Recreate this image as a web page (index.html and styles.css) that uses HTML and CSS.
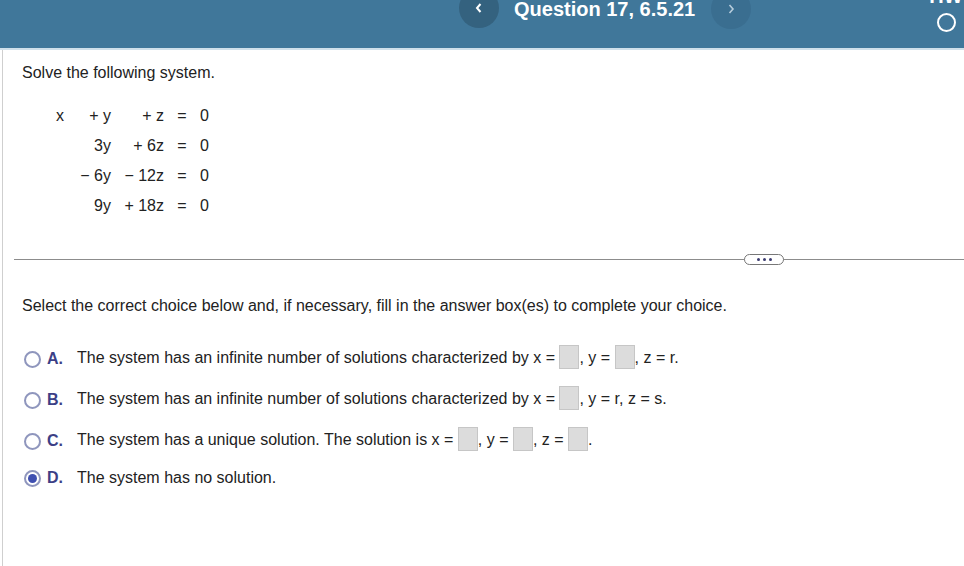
FILE: index.html
```html
<!DOCTYPE html>
<html>
<head>
<meta charset="utf-8">
<link rel="stylesheet" href="styles.css">
</head>
<body>
<header class="top">
  <div class="nav">
    <div class="navbtn prev"><svg width="10" height="12" viewBox="0 0 10 12"><path d="M6.5 2 L3 6 L6.5 10" fill="none" stroke="#fff" stroke-width="2"/></svg></div>
    <div class="title">Question 17, 6.5.21</div>
    <div class="navbtn next"><svg width="10" height="12" viewBox="0 0 10 12"><path d="M3.5 2 L7 6 L3.5 10" fill="none" stroke="#b7cddc" stroke-width="1.6"/></svg></div>
  </div>
  <div class="hw">
    <div class="hwtext">HW</div>
    <div class="ring"></div>
  </div>
</header>
<main class="content">
  <p class="prompt">Solve the following system.</p>
  <div class="system">
    <span class="c1">x</span><span class="c2">+ y</span><span class="c3">+ z</span><span class="c4">=</span><span class="c5">0</span>
    <span class="c1"></span><span class="c2">3y</span><span class="c3">+ 6z</span><span class="c4">=</span><span class="c5">0</span>
    <span class="c1"></span><span class="c2">− 6y</span><span class="c3">− 12z</span><span class="c4">=</span><span class="c5">0</span>
    <span class="c1"></span><span class="c2">9y</span><span class="c3">+ 18z</span><span class="c4">=</span><span class="c5">0</span>
  </div>
  <div class="divider"><span class="pill"><i></i><i></i><i></i></span></div>
  <p class="instr">Select the correct choice below and, if necessary, fill in the answer box(es) to complete your choice.</p>
  <div class="choices">
    <div class="choice"><span class="radio"></span><span class="letter">A.</span><span class="text">The system has an infinite number of solutions characterized by x = <span class="box"></span>, y = <span class="box"></span>, z = r.</span></div>
    <div class="choice"><span class="radio"></span><span class="letter">B.</span><span class="text">The system has an infinite number of solutions characterized by x = <span class="box"></span>, y = r, z = s.</span></div>
    <div class="choice"><span class="radio"></span><span class="letter">C.</span><span class="text">The system has a unique solution. The solution is x = <span class="box"></span>, y = <span class="box"></span>, z = <span class="box"></span>.</span></div>
    <div class="choice sel"><span class="radio on"></span><span class="letter">D.</span><span class="text">The system has no solution.</span></div>
  </div>
</main>
</body>
</html>
```
FILE: styles.css
```css
* { box-sizing: border-box; }
html, body { margin: 0; padding: 0; background: #fff; }
body {
  font-family: "Liberation Sans", Arial, sans-serif;
  color: #222;
  width: 964px;
  height: 566px;
  overflow: hidden;
}
.top {
  height: 50px;
  background: #40779a;
  border-bottom: 2px solid #cfe0ea;
  position: relative;
  overflow: hidden;
}
.nav {
  display: flex;
  align-items: flex-start;
  padding-left: 459px;
}
.navbtn {
  width: 40px;
  height: 40px;
  border-radius: 50%;
  margin-top: -12px;
  display: flex;
  align-items: center;
  justify-content: center;
  padding-top: 12px;
}
.navbtn svg { margin-top: -12px; }
.prev { background: #34627f; }
.next { background: #3a6e90; margin-left: 16px; margin-top: -11px; }
.title {
  color: #fff;
  font-weight: bold;
  font-size: 20px;
  margin-left: 15px;
  margin-top: -2px;
  line-height: 22px;
}
.hw {
  position: absolute;
  right: 4px;
  top: 0;
  width: 28px;
  display: flex;
  flex-direction: column;
  align-items: center;
}
.hwtext {
  color: #fff;
  font-weight: bold;
  font-size: 20px;
  line-height: 20px;
  margin-top: -14px;
}
.ring {
  width: 19px;
  height: 19px;
  border: 2.5px solid #fff;
  border-radius: 50%;
  margin-top: 7px;
}
.content {
  border-left: 1px solid #cfcfcf;
  margin-left: 2px;
  height: 516px;
  padding-top: 14px;
}
.prompt {
  margin: 0 0 0 19px;
  font-size: 16px;
  line-height: 18px;
}
.system {
  display: grid;
  grid-template-columns: 20px 35px 53px 36px 20px;
  grid-auto-rows: 30px;
  margin: 25px 0 0 53px;
  font-size: 16px;
  line-height: 18px;
  width: max-content;
}
.system span { text-align: right; white-space: nowrap; }
.system .c1 { text-align: left; }
.system .c4 { text-align: center; }
.system .c5 { text-align: left; }
.divider {
  margin: 32px 0 0 11px;
  height: 1px;
  background: #8c8c8c;
  position: relative;
}
.pill {
  position: absolute;
  left: 730px;
  top: -5px;
  width: 40px;
  height: 11px;
  border: 1px solid #777;
  border-radius: 6px;
  background: #fff;
  display: flex;
  align-items: center;
  justify-content: center;
  gap: 3px;
}
.pill i {
  width: 3px;
  height: 3px;
  background: #3c3c70;
  border-radius: 50%;
}
.instr {
  margin: 37px 0 0 19px;
  font-size: 16px;
  line-height: 18px;
}
.choices {
  margin: 32px 0 0 21px;
  display: flex;
  flex-direction: column;
  gap: 17px;
}
.choice {
  display: flex;
  align-items: center;
  font-size: 16px;
  height: 24px;
}
.choice.sel { margin-top: -4px; }
.radio {
  width: 17px;
  height: 17px;
  border: 2px solid #8f96bd;
  border-radius: 50%;
  flex: none;
  display: flex;
  align-items: center;
  justify-content: center;
}
.radio.on::after {
  content: "";
  width: 9px;
  height: 9px;
  border-radius: 50%;
  background: #3f4fb0;
}
.letter {
  font-weight: bold;
  color: #3c3f86;
  margin-left: 6px;
  width: 30px;
}
.text {
  color: #222;
  white-space: nowrap;
}
.box {
  display: inline-block;
  width: 20px;
  height: 24px;
  background: #dcdcdc;
  border: 1px solid #c6c6c6;
  vertical-align: middle;
  margin-top: -4px;
}
```
